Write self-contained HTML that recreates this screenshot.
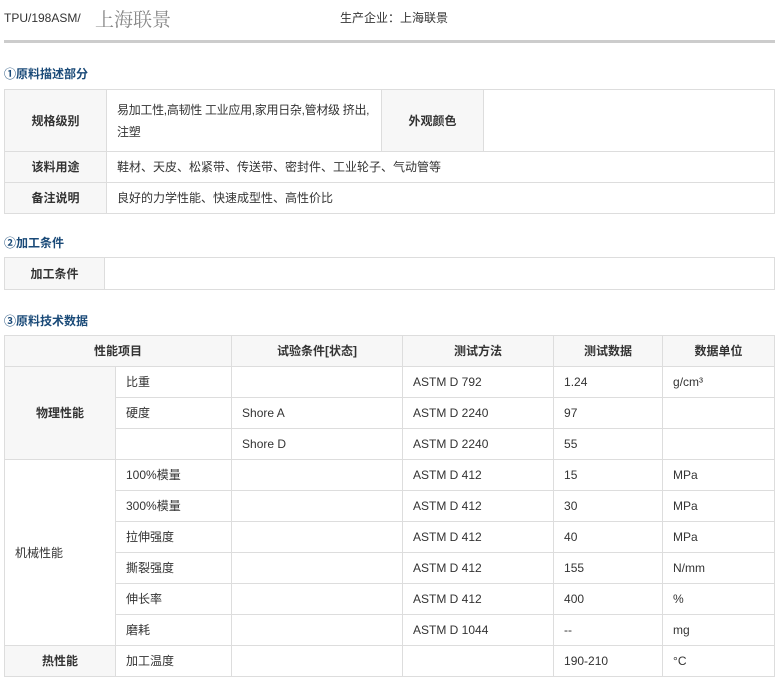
<!DOCTYPE html><html><head><meta charset="utf-8"><style>
body{margin:0;background:#fff;font-family:"Liberation Sans","Noto Sans CJK SC",sans-serif;font-size:12px;color:#333;width:775px;height:673px;overflow:hidden;position:relative}
.a{position:absolute}
table{position:absolute;left:4px;border-collapse:collapse;table-layout:fixed;width:771px}
td{border:1px solid #ddd;padding:0 10px;height:30px;box-sizing:border-box;line-height:22px;vertical-align:middle}
.l{background:#f7f7f7;font-weight:bold;text-align:center;color:#333}
.t{left:4px;color:#1a4a78;font-weight:bold;font-size:12px}
</style></head><body>
<div class="a" style="left:4px;top:11px;font-size:12px;color:#333">TPU/198ASM/</div>
<div class="a" style="left:95px;top:5px;font-size:19px;color:#888;font-family:'Liberation Serif','Noto Serif CJK SC',serif">上海联景</div>
<div class="a" style="left:340px;top:9px;font-size:12px;color:#333">生产企业：上海联景</div>
<div class="a" style="left:4px;top:40px;width:771px;height:3px;background:#ccc"></div>
<div class="a t" style="top:65px">①原料描述部分</div>
<table style="top:89px">
<colgroup><col style="width:102px"><col style="width:275px"><col style="width:102px"><col></colgroup>
<tr><td class="l" style="height:62px">规格级别</td><td style="padding:4px 0 4px 10px;white-space:nowrap;overflow:hidden;letter-spacing:-0.3px">易加工性,高韧性 工业应用,家用日杂,管材级 挤出,<br>注塑</td><td class="l">外观颜色</td><td></td></tr>
<tr><td class="l" style="height:31px">该料用途</td><td colspan="3">鞋材、天皮、松紧带、传送带、密封件、工业轮子、气动管等</td></tr>
<tr><td class="l" style="height:31px">备注说明</td><td colspan="3">良好的力学性能、快速成型性、高性价比</td></tr>
</table>
<div class="a t" style="top:234px">②加工条件</div>
<table style="top:257px">
<colgroup><col style="width:100px"><col></colgroup>
<tr><td class="l" style="height:32px">加工条件</td><td></td></tr>
</table>
<div class="a t" style="top:312px">③原料技术数据</div>
<table style="top:335px">
<colgroup><col style="width:111px"><col style="width:116px"><col style="width:171px"><col style="width:151px"><col style="width:109px"><col></colgroup>
<tr><td class="l" colspan="2" style="height:31px">性能项目</td><td class="l">试验条件[状态]</td><td class="l">测试方法</td><td class="l">测试数据</td><td class="l">数据单位</td></tr>
<tr><td class="l" rowspan="3">物理性能</td><td style="height:31px">比重</td><td></td><td>ASTM D 792</td><td>1.24</td><td>g/cm³</td></tr>
<tr><td style="height:31px">硬度</td><td>Shore A</td><td>ASTM D 2240</td><td>97</td><td></td></tr>
<tr><td style="height:31px"></td><td>Shore D</td><td>ASTM D 2240</td><td>55</td><td></td></tr>
<tr><td rowspan="6">机械性能</td><td style="height:31px">100%模量</td><td></td><td>ASTM D 412</td><td>15</td><td>MPa</td></tr>
<tr><td style="height:31px">300%模量</td><td></td><td>ASTM D 412</td><td>30</td><td>MPa</td></tr>
<tr><td style="height:31px">拉伸强度</td><td></td><td>ASTM D 412</td><td>40</td><td>MPa</td></tr>
<tr><td style="height:31px">撕裂强度</td><td></td><td>ASTM D 412</td><td>155</td><td>N/mm</td></tr>
<tr><td style="height:31px">伸长率</td><td></td><td>ASTM D 412</td><td>400</td><td>%</td></tr>
<tr><td style="height:31px">磨耗</td><td></td><td>ASTM D 1044</td><td>--</td><td>mg</td></tr>
<tr><td class="l" style="height:31px">热性能</td><td>加工温度</td><td></td><td></td><td>190-210</td><td>°C</td></tr>
</table>
</body></html>
